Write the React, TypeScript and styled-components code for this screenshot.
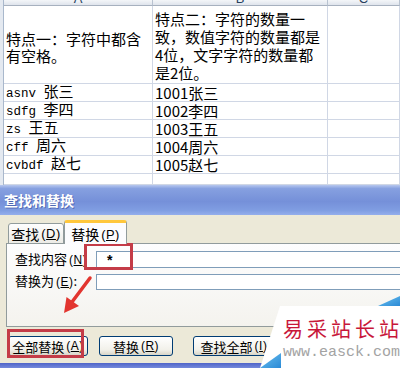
import React from "react"
import styled, { createGlobalStyle } from "styled-components"

const GlobalStyle = createGlobalStyle`
  html, body {
    margin: 0;
    padding: 0;
    background: #fff;
  }
  body {
    font-family: "Noto Sans CJK SC", "Liberation Sans", sans-serif;
  }
`

const cjk = `"Noto Sans CJK SC", "Liberation Sans", sans-serif`

const Page = styled.div`
  position: relative;
  width: 400px;
  height: 368px;
  overflow: hidden;
  display: flex;
  flex-direction: column;
`

/* ---------- spreadsheet ---------- */

const Sheet = styled.div`
  display: flex;
  flex-direction: column;
  background: #fff;
`

const Row = styled.div<{ $h: number }>`
  display: grid;
  grid-template-columns: 4px 149px 175px 1fr;
  height: ${({ $h }) => $h}px;
`

const Stub = styled.div`
  background: #e4e9f0;
  border-right: 1px solid #a9b8cc;
`

const HeadCell = styled.div`
  display: flex;
  justify-content: center;
  align-items: flex-end;
  overflow: hidden;
  background: linear-gradient(#f4f6f9, #dfe4ec);
  border-right: 1px solid #b8c2d0;
  border-bottom: 1px solid #a7b1bf;
  font-family: "Liberation Sans", sans-serif;
  font-size: 13px;
  line-height: 12px;
  color: #27415f;
`

const Cell = styled.div<{ $align?: string; $pt?: number; $pb?: number; $lh?: number }>`
  display: flex;
  flex-direction: column;
  justify-content: ${({ $align }) => $align ?? "center"};
  padding: ${({ $pt }) => $pt ?? 0}px 2px ${({ $pb }) => $pb ?? 0}px 2px;
  border-right: 1px solid #d0d7e5;
  border-bottom: 1px solid #d0d7e5;
  font-family: ${cjk};
  font-size: 15px;
  line-height: ${({ $lh }) => $lh ?? 18}px;
  color: #000;
  white-space: nowrap;
  overflow: hidden;
`

const Latin = styled.span`
  font-family: "Liberation Mono", monospace;
  font-size: 12.5px;
`

/* ---------- dialog ---------- */

const Dialog = styled.div`
  flex: 1;
  display: flex;
  flex-direction: column;
  background: #ece9d8;
  font-family: ${cjk};
  font-size: 13px;
  color: #000;
`

const TitleBar = styled.div`
  height: 30px;
  display: flex;
  align-items: center;
  padding-left: 4px;
  background: linear-gradient(#b7c7ee 0, #86a0e0 12%, #7590d9 55%, #809ee2 85%, #94aeec 100%);
  color: #fff;
  font-weight: bold;
  font-size: 14px;
  text-shadow: 1px 1px 0 rgba(30, 50, 130, 0.45);
`

const Body = styled.div`
  flex: 1;
  display: flex;
  flex-direction: column;
  padding: 5px 0 7px 0;
`

const Tabs = styled.div`
  position: relative;
  z-index: 1;
  height: 24px;
  margin-bottom: -1px;
  padding-left: 8px;
  display: flex;
  align-items: flex-end;
`

const Tab = styled.div<{ $active?: boolean; $w: number }>`
  box-sizing: border-box;
  width: ${({ $w }) => $w}px;
  height: ${({ $active }) => ($active ? 24 : 21)}px;
  display: flex;
  align-items: center;
  justify-content: center;
  padding-top: ${({ $active }) => ($active ? 1 : 0)}px;
  border: 1px solid #919b9c;
  border-bottom: ${({ $active }) => ($active ? "none" : "1px solid #919b9c")};
  border-top: ${({ $active }) => ($active ? "3px solid #ffc73c" : "1px solid #919b9c")};
  border-radius: 3px 3px 0 0;
  background: ${({ $active }) => ($active ? "#fcfcfe" : "linear-gradient(#fefefe, #ecebe6)")};
  font-size: 14px;
  white-space: nowrap;
`

const Key = styled.span`
  margin-left: 2px;
  letter-spacing: 0.5px;
  font-family: "Liberation Sans", sans-serif;
  font-size: 0.92em;
`

const Panel = styled.div`
  box-sizing: border-box;
  height: 84px;
  margin-left: 6px;
  margin-right: -30px;
  padding: 7px 0 0 8px;
  border: 1px solid #919b9c;
  background: linear-gradient(#fdfdfe, #f4f3ee);
  display: grid;
  grid-template-columns: 81px 1fr;
  grid-auto-rows: min-content;
  row-gap: 5px;
  align-items: center;
`

const Label = styled.div`
  font-size: 13px;
  line-height: 16px;
  white-space: nowrap;
`

const Field = styled.div<{ $h: number }>`
  height: ${({ $h }) => $h}px;
  box-sizing: border-box;
  border: 1px solid #7f9db9;
  background: #fff;
  display: flex;
  align-items: center;
  padding-left: 10px;
  font-family: "Liberation Sans", sans-serif;
  font-size: 14px;
  font-weight: bold;
`

const Buttons = styled.div`
  display: flex;
  margin-top: 9px;
  padding-left: 8px;
`

const Button = styled.div<{ $w: number; $ml?: number }>`
  box-sizing: border-box;
  width: ${({ $w }) => $w}px;
  height: 20px;
  margin-left: ${({ $ml }) => $ml ?? 0}px;
  display: flex;
  align-items: center;
  justify-content: center;
  border: 1px solid #003c74;
  border-radius: 3px;
  background: linear-gradient(#ffffff, #f2f1ea 70%, #d8d5c8);
  font-size: 13px;
  white-space: nowrap;
  overflow: hidden;
`

const BottomBar = styled.div`
  height: 6px;
  background: linear-gradient(#4f64c8, #7d92e0);
`

/* ---------- overlays ---------- */

const RedBox = styled.div<{ $x: number; $y: number; $w: number; $h: number }>`
  position: absolute;
  left: ${({ $x }) => $x}px;
  top: ${({ $y }) => $y}px;
  width: ${({ $w }) => $w}px;
  height: ${({ $h }) => $h}px;
  box-sizing: border-box;
  border: 3px solid #c43c48;
`

const ArrowSvg = styled.svg`
  position: absolute;
  left: 55px;
  top: 270px;
`

const Watermark = styled.div`
  position: absolute;
  left: 256px;
  top: 294px;
  width: 144px;
  height: 74px;
`

const WatermarkShape = styled.svg`
  position: absolute;
  left: 0;
  top: 0;
`

const WatermarkText = styled.div`
  position: relative;
  display: flex;
  flex-direction: column;
  padding: 24px 0 0 27px;
`

const Brand = styled.div`
  font-family: ${cjk};
  font-size: 20px;
  line-height: 22px;
  letter-spacing: 4px;
  color: #c8173a;
  white-space: nowrap;
`

const Url = styled.div`
  margin-top: 5px;
  font-family: "Liberation Mono", monospace;
  font-size: 15px;
  line-height: 16px;
  color: #a3a3a3;
  white-space: nowrap;
`

type Entry = { a: string; name: string; b: string }

const entries: Entry[] = [
  { a: "asnv", name: "张三", b: "1001张三" },
  { a: "sdfg", name: "李四", b: "1002李四" },
  { a: "zs", name: "王五", b: "1003王五" },
  { a: "cff", name: "周六", b: "1004周六" },
  { a: "cvbdf", name: "赵七", b: "1005赵七" },
]

const Mnemonic = ({ k }: { k: string }) => (
  <Key>
    (<u>{k}</u>)
  </Key>
)

const App = () => {
  return (
    <Page>
      <GlobalStyle />
      <Sheet>
        <Row $h={6}>
          <Stub />
          <HeadCell>A</HeadCell>
          <HeadCell>B</HeadCell>
          <HeadCell>C</HeadCell>
        </Row>
        <Row $h={78}>
          <Stub />
          <Cell $pt={4} $lh={17}>
            <span>特点一：字符中都含</span>
            <span>有空格。</span>
          </Cell>
          <Cell $align="flex-end" $pb={1}>
            <span>特点二：字符的数量一</span>
            <span>致，数值字符的数量都是</span>
            <span>4位，文字字符的数量都</span>
            <span>是2位。</span>
          </Cell>
          <Cell />
        </Row>
        {entries.map(e => (
          <Row $h={18} key={e.b}>
            <Stub />
            <Cell>
              <span>
                <Latin>{e.a} </Latin>
                {e.name}
              </span>
            </Cell>
            <Cell>{e.b}</Cell>
            <Cell />
          </Row>
        ))}
        <Row $h={11}>
          <Stub />
          <Cell />
          <Cell />
          <Cell />
        </Row>
      </Sheet>

      <Dialog>
        <TitleBar>查找和替换</TitleBar>
        <Body>
          <Tabs>
            <Tab $w={56}>
              查找<Mnemonic k="D" />
            </Tab>
            <Tab $w={63} $active>
              替换<Mnemonic k="P" />
            </Tab>
          </Tabs>
          <Panel>
            <Label>
              查找内容<Mnemonic k="N" />
            </Label>
            <Field $h={17}>*</Field>
            <Label>
              替换为<Mnemonic k="E" />:
            </Label>
            <Field $h={16} />
          </Panel>
          <Buttons>
            <Button $w={80}>
              全部替换<Mnemonic k="A" />
            </Button>
            <Button $w={74} $ml={11}>
              替换<Mnemonic k="R" />
            </Button>
            <Button $w={82} $ml={20}>
              查找全部<Mnemonic k="I" />
            </Button>
          </Buttons>
        </Body>
        <BottomBar />
      </Dialog>

      <RedBox $x={84} $y={243} $w={49} $h={27} />
      <RedBox $x={7} $y={329} $w={77} $h={29} />

      <ArrowSvg width="45" height="50" viewBox="0 0 45 50">
        <line x1="35" y1="8" x2="17" y2="32" stroke="#e2352f" strokeWidth="3.5" strokeLinecap="round" />
        <polygon points="9,43 24,36 11.5,27" fill="#e2352f" />
      </ArrowSvg>

      <Watermark>
        <WatermarkShape width="144" height="74" viewBox="0 0 144 74">
          <defs>
            <linearGradient id="wmBlue" x1="0" y1="0" x2="1" y2="1">
              <stop offset="0" stopColor="#6cc2f0" />
              <stop offset="1" stopColor="#2b8ad6" />
            </linearGradient>
          </defs>
          <polygon points="24,12 144,12 144,74 4,74" fill="#fff" />
          <polygon points="122,12 144,2 144,12" fill="url(#wmBlue)" />
          <polygon points="4,74 25,59 25,74" fill="url(#wmBlue)" />
        </WatermarkShape>
        <WatermarkText>
          <Brand>易采站长站</Brand>
          <Url>www.easck.com</Url>
        </WatermarkText>
      </Watermark>
    </Page>
  )
}

export default App
